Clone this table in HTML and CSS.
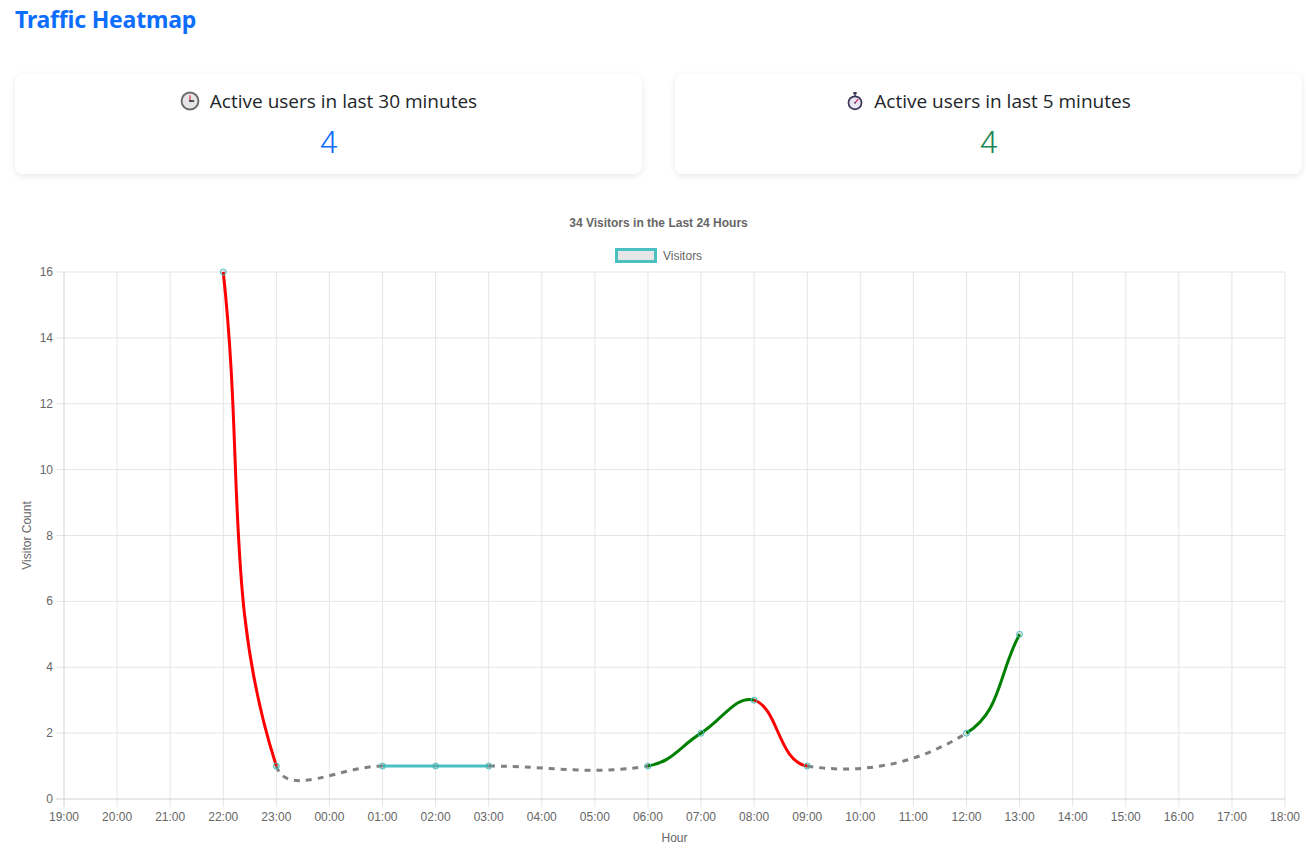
FILE: index.html
```html
<!DOCTYPE html>
<html lang="en">
<head>
<meta charset="utf-8">
<title>Traffic Heatmap</title>
<link rel="stylesheet" href="styles.css">
</head>
<body>
<div class="top">
  <h1 class="page-title">Traffic Heatmap</h1>
  <div class="cards">
    <div class="card">
      <div class="card-label">
        <svg class="icon" viewBox="0 0 20 20" width="20" height="20">
          <circle cx="10" cy="10" r="9.4" fill="#6b6b6b"/>
          <circle cx="10" cy="10" r="7.5" fill="#e6e4e6"/>
          <line x1="10" y1="10" x2="10" y2="4.2" stroke="#d0263c" stroke-width="1.1"/>
          <line x1="10" y1="10" x2="14.2" y2="10" stroke="#333" stroke-width="1.6"/>
          <circle cx="10" cy="10" r="1" fill="#333"/>
        </svg>
        <span>Active users in last 30 minutes</span>
      </div>
      <div class="card-value value-blue">4</div>
    </div>
    <div class="card">
      <div class="card-label">
        <svg class="icon" viewBox="0 0 20 22" width="18" height="22">
          <rect x="8" y="1" width="4" height="2.4" rx="0.8" fill="#3d3559"/>
          <rect x="9.2" y="3" width="1.6" height="2.5" fill="#3d3559"/>
          <circle cx="10" cy="13" r="8.2" fill="#3d3559"/>
          <circle cx="10" cy="13" r="6.3" fill="#e9e4f1"/>
          <line x1="10" y1="13" x2="13.6" y2="9" stroke="#e0245e" stroke-width="1.4"/>
          <circle cx="10" cy="13" r="1" fill="#3d3559"/>
        </svg>
        <span>Active users in last 5 minutes</span>
      </div>
      <div class="card-value value-green">4</div>
    </div>
  </div>
</div>
<div class="chart">
  <svg class="chart-svg" viewBox="0 190 1306 659" width="1306" height="659">
    <g class="grid">
      <line x1="56" y1="272" x2="1285" y2="272"/>
      <line x1="56" y1="337.88" x2="1285" y2="337.88"/>
      <line x1="56" y1="403.75" x2="1285" y2="403.75"/>
      <line x1="56" y1="469.63" x2="1285" y2="469.63"/>
      <line x1="56" y1="535.5" x2="1285" y2="535.5"/>
      <line x1="56" y1="601.38" x2="1285" y2="601.38"/>
      <line x1="56" y1="667.25" x2="1285" y2="667.25"/>
      <line x1="56" y1="733.13" x2="1285" y2="733.13"/>
      <line x1="117.09" y1="272" x2="117.09" y2="807"/>
      <line x1="170.17" y1="272" x2="170.17" y2="807"/>
      <line x1="223.26" y1="272" x2="223.26" y2="807"/>
      <line x1="276.35" y1="272" x2="276.35" y2="807"/>
      <line x1="329.43" y1="272" x2="329.43" y2="807"/>
      <line x1="382.52" y1="272" x2="382.52" y2="807"/>
      <line x1="435.61" y1="272" x2="435.61" y2="807"/>
      <line x1="488.70" y1="272" x2="488.70" y2="807"/>
      <line x1="541.78" y1="272" x2="541.78" y2="807"/>
      <line x1="594.87" y1="272" x2="594.87" y2="807"/>
      <line x1="647.96" y1="272" x2="647.96" y2="807"/>
      <line x1="701.04" y1="272" x2="701.04" y2="807"/>
      <line x1="754.13" y1="272" x2="754.13" y2="807"/>
      <line x1="807.22" y1="272" x2="807.22" y2="807"/>
      <line x1="860.30" y1="272" x2="860.30" y2="807"/>
      <line x1="913.39" y1="272" x2="913.39" y2="807"/>
      <line x1="966.48" y1="272" x2="966.48" y2="807"/>
      <line x1="1019.57" y1="272" x2="1019.57" y2="807"/>
      <line x1="1072.65" y1="272" x2="1072.65" y2="807"/>
      <line x1="1125.74" y1="272" x2="1125.74" y2="807"/>
      <line x1="1178.83" y1="272" x2="1178.83" y2="807"/>
      <line x1="1231.91" y1="272" x2="1231.91" y2="807"/>
      <line x1="1285" y1="272" x2="1285" y2="807"/>
    </g>
    <g class="axis">
      <line x1="64" y1="272" x2="64" y2="807"/>
      <line x1="56" y1="799" x2="1285" y2="799"/>
    </g>

    <text class="chart-title" x="658.5" y="222.5">34 Visitors in the Last 24 Hours</text>
    <rect class="legend-box" x="616.5" y="249.5" width="39" height="12"/>
    <text class="legend-text" x="663" y="256">Visitors</text>

    <g class="y-labels">
      <text x="53" y="272">16</text>
      <text x="53" y="337.88">14</text>
      <text x="53" y="403.75">12</text>
      <text x="53" y="469.63">10</text>
      <text x="53" y="535.5">8</text>
      <text x="53" y="601.38">6</text>
      <text x="53" y="667.25">4</text>
      <text x="53" y="733.13">2</text>
      <text x="53" y="799">0</text>
    </g>
    <g class="x-labels">
      <text x="64" y="817">19:00</text>
      <text x="117.09" y="817">20:00</text>
      <text x="170.17" y="817">21:00</text>
      <text x="223.26" y="817">22:00</text>
      <text x="276.35" y="817">23:00</text>
      <text x="329.43" y="817">00:00</text>
      <text x="382.52" y="817">01:00</text>
      <text x="435.61" y="817">02:00</text>
      <text x="488.70" y="817">03:00</text>
      <text x="541.78" y="817">04:00</text>
      <text x="594.87" y="817">05:00</text>
      <text x="647.96" y="817">06:00</text>
      <text x="701.04" y="817">07:00</text>
      <text x="754.13" y="817">08:00</text>
      <text x="807.22" y="817">09:00</text>
      <text x="860.30" y="817">10:00</text>
      <text x="913.39" y="817">11:00</text>
      <text x="966.48" y="817">12:00</text>
      <text x="1019.57" y="817">13:00</text>
      <text x="1072.65" y="817">14:00</text>
      <text x="1125.74" y="817">15:00</text>
      <text x="1178.83" y="817">16:00</text>
      <text x="1231.91" y="817">17:00</text>
      <text x="1285" y="817">18:00</text>
    </g>
    <text class="axis-title" x="674.5" y="837.5">Hour</text>
    <text class="axis-title" x="27" y="535.5" transform="rotate(-90 27 535.5)">Visitor Count</text>

    <g class="series">
      <path class="seg-down" d="M223.26,272 C244.50,469.62 223.86,603.22 276.35,766.06"/>
      <path class="seg-gap" d="M276.35,766.06 C287.56,799 340.05,766.06 382.52,766.06"/>
      <path class="seg-flat" d="M382.52,766.06 C403.75,766.06 414.37,766.06 435.61,766.06"/>
      <path class="seg-flat" d="M435.61,766.06 C456.85,766.06 467.46,766.06 488.70,766.06"/>
      <path class="seg-gap" d="M488.70,766.06 C552.41,766.06 586.95,775.52 647.96,766.06"/>
      <path class="seg-up" d="M647.96,766.06 C671.89,762.35 679.81,746.30 701.04,733.13"/>
      <path class="seg-up" d="M701.04,733.13 C722.27,719.96 736.09,694.60 754.13,700.19"/>
      <path class="seg-down" d="M754.13,700.19 C778.56,707.77 778.15,761.55 807.22,766.06"/>
      <path class="seg-gap" d="M807.22,766.06 C863.09,774.73 916.22,764.31 966.48,733.13"/>
      <path class="seg-up" d="M966.48,733.13 C1001.16,711.62 998.33,673.84 1019.57,634.31"/>
    </g>
    <g class="points">
      <circle cx="223.26" cy="272" r="3"/>
      <circle cx="276.35" cy="766.06" r="3"/>
      <circle cx="382.52" cy="766.06" r="3"/>
      <circle cx="435.61" cy="766.06" r="3"/>
      <circle cx="488.70" cy="766.06" r="3"/>
      <circle cx="647.96" cy="766.06" r="3"/>
      <circle cx="701.04" cy="733.13" r="3"/>
      <circle cx="754.13" cy="700.19" r="3"/>
      <circle cx="807.22" cy="766.06" r="3"/>
      <circle cx="966.48" cy="733.13" r="3"/>
      <circle cx="1019.57" cy="634.31" r="3"/>
    </g>
  </svg>
</div>
</body>
</html>
```

FILE: styles.css
```css
html, body {
  margin: 0;
  padding: 0;
  background: #ffffff;
}

body {
  font-family: "Segoe UI", "Open Sans", "Noto Sans", sans-serif;
  color: #212529;
}

.top {
  padding: 3px 4px 0 15px;
}

.page-title {
  margin: 0;
  font-family: "Segoe UI", "Noto Sans", sans-serif;
  font-size: 23px;
  font-weight: 700;
  line-height: 32px;
  color: #0d6efd;
  letter-spacing: -0.2px;
}

.cards {
  display: grid;
  grid-template-columns: 1fr 1fr;
  gap: 33px;
  margin-top: 39px;
}

.card {
  background: #ffffff;
  border-radius: 8px;
  box-shadow: 0 2px 7px rgba(0, 0, 0, 0.09);
  padding: 12px 16px 13px;
  text-align: center;
}

.card-label {
  display: flex;
  align-items: center;
  justify-content: center;
  gap: 10px;
  font-size: 19px;
  line-height: 30px;
  color: #212529;
}

.icon {
  display: block;
  flex: none;
}

.card-value {
  margin-top: 7px;
  font-family: Roboto, "Noto Sans", sans-serif;
  font-size: 32px;
  font-weight: 300;
  line-height: 38px;
}

.value-blue {
  color: #0d6efd;
}

.value-green {
  color: #198754;
}

.chart {
  margin-top: 16px;
}

.chart-svg {
  display: block;
}

.grid line {
  stroke: #e5e5e5;
  stroke-width: 1;
}

.axis line {
  stroke: #d2d2d2;
  stroke-width: 1;
}

.chart-svg text {
  font-family: "Liberation Sans", Arial, sans-serif;
  font-size: 12px;
  fill: #666666;
  dominant-baseline: central;
}

.chart-title {
  font-weight: 700;
  text-anchor: middle;
}

.legend-box {
  fill: #e6e6e6;
  stroke: rgb(75, 192, 192);
  stroke-width: 3;
}

.y-labels text {
  text-anchor: end;
}

.x-labels text {
  text-anchor: middle;
}

.axis-title {
  text-anchor: middle;
}

.series path {
  fill: none;
  stroke-width: 3;
  stroke-linecap: butt;
  stroke-linejoin: round;
}

.seg-down {
  stroke: #ff0000;
}

.seg-up {
  stroke: #008000;
}

.seg-flat {
  stroke: rgb(75, 192, 192);
}

.seg-gap {
  stroke: #808080;
  stroke-dasharray: 6 6;
}

.points circle {
  fill: rgba(0, 0, 0, 0.1);
  stroke: rgb(75, 192, 192);
  stroke-width: 1;
}
```
